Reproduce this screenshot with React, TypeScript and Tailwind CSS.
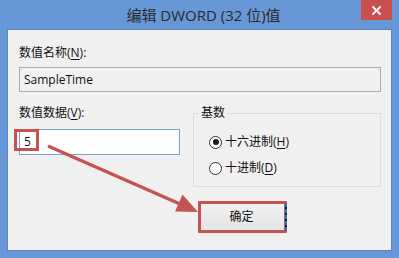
import React from "react";

const font = "font-['Open_Sans','Noto_Sans_CJK_SC',sans-serif]";

function Radio({ checked, label, keyChar }: { checked?: boolean; label: string; keyChar: string }) {
  return (
    <div className="flex items-center h-[16px] gap-[3px]">
      <div className="w-[13px] h-[13px] rounded-full border border-[#333] bg-white flex items-center justify-center">
        {checked && <div className="w-[6px] h-[6px] rounded-full bg-[#1a1a1a]" />}
      </div>
      <span className="text-[12px] leading-[16px] text-[#111]">
        {label}(<span className="underline underline-offset-[2px]">{keyChar}</span>)
      </span>
    </div>
  );
}

export default function App() {
  return (
    <div className={`relative w-[399px] h-[258px] bg-[#6897d8] flex flex-col px-[7px] pb-[7px] overflow-hidden ${font}`}>
      {/* Title bar */}
      <div className="relative h-[29px] flex items-center justify-center shrink-0">
        <span className="text-[15px] leading-[20px] text-[#2a2a2a] pt-[1px] pl-[8px]">编辑 DWORD (32 位)值</span>
        <div className="absolute top-0 right-0 w-[31px] h-[20px] bg-[#c9504f] flex items-center justify-center">
          <svg width="9" height="9" viewBox="0 0 9 9">
            <path d="M1 1 L8 8 M8 1 L1 8" stroke="#fff" strokeWidth="1.8" strokeLinecap="square" />
          </svg>
        </div>
      </div>

      {/* Client */}
      <div className="flex-1 bg-[#f0f0f0] border border-[#5583c6] pl-[11px] pr-[10px] pt-[15px] flex flex-col">
        <div className="text-[12px] leading-[16px] text-[#111]">
          数值名称(<span className="underline underline-offset-[2px]">N</span>):
        </div>
        <div className="mt-[6px] h-[25px] border border-[#acacac] bg-[#f0f0f0] flex items-center px-[4px] text-[12px] text-[#111]">
          SampleTime
        </div>

        <div className="mt-[13px] flex items-start">
          <div className="flex flex-col w-[161px]">
            <div className="text-[12px] leading-[16px] text-[#111]">
              数值数据(<span className="underline underline-offset-[2px]">V</span>):
            </div>
            <div className="mt-[8px] h-[26px] border border-[#7da2ce] bg-white flex items-center px-[4px] text-[12px] text-[#111]">
              5
            </div>
          </div>
          <fieldset className="ml-auto w-[188px] h-[82px] border border-[#dcdcdc] pl-[15px]">
            <legend className="ml-[-10px] px-[2px] text-[12px] leading-[16px] text-[#111]">基数</legend>
            <div className="pt-[13px] flex flex-col gap-[10px]">
              <Radio checked label="十六进制" keyChar="H" />
              <Radio label="十进制" keyChar="D" />
            </div>
          </fieldset>
        </div>

        <div className="mt-[14px] pl-[179px]">
          <div className="relative w-[89px] h-[32px] bg-gradient-to-b from-[#f2f2f2] to-[#e3e3e3] flex items-center justify-center">
            <span className="text-[12px] leading-[16px] text-[#111] pr-[2px]">确定</span>
            <div className="absolute inset-0 border-[3px] border-[#c45452] rounded-[1px]" />
            <div className="absolute right-0 top-[2px] bottom-[2px] w-[2px] bg-[repeating-linear-gradient(to_bottom,#1c78c0_0px,#1c78c0_4px,#0a2236_4px,#0a2236_6px)]" />
          </div>
        </div>
      </div>

      {/* Annotation: red box around value */}
      <div className="absolute left-[14px] top-[129px] w-[25px] h-[22px] border-[3px] border-[#c45452]" />

      {/* Annotation: arrow */}
      <svg className="absolute left-0 top-0 pointer-events-none" width="399" height="258" viewBox="0 0 399 258">
        <line x1="48" y1="146" x2="180" y2="204" stroke="#c45452" strokeWidth="3.5" />
        <polygon points="198,212 175,211.5 182.5,194.5" fill="#c45452" />
      </svg>
    </div>
  );
}
